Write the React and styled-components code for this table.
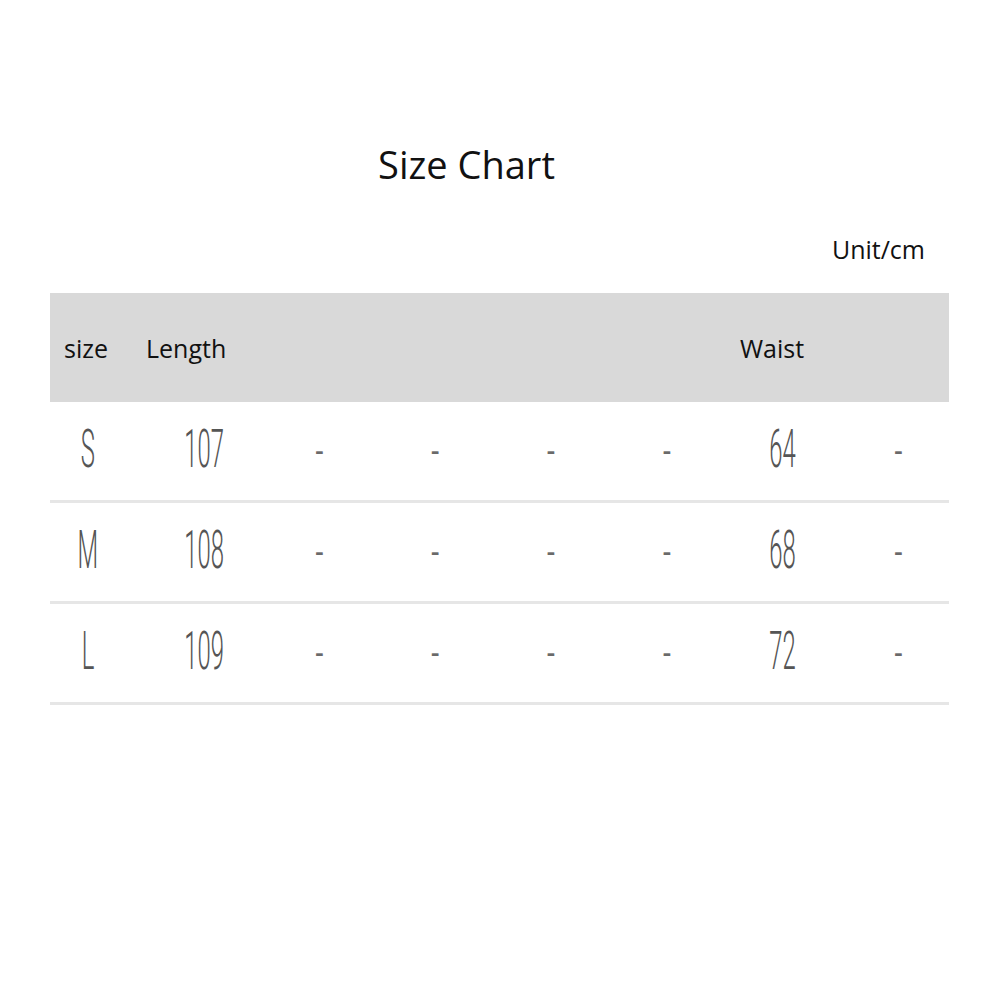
import React from "react";
import styled, { createGlobalStyle } from "styled-components";

const Global = createGlobalStyle`
  html, body { margin: 0; padding: 0; background: #fff; }
  body { font-family: "Open Sans", "Noto Sans", sans-serif; color: #111; }
`;

const Page = styled.div`
  width: 1000px;
  height: 1000px;
  box-sizing: border-box;
  padding: 140px 51px 0 50px;
  display: flex;
  flex-direction: column;
`;

const Title = styled.h1`
  margin: 0 16px 0 -50px;
  text-align: center;
  font-size: 38px;
  font-weight: 400;
  line-height: 48px;
  color: #111;
`;

const Unit = styled.div`
  margin-top: 45px;
  align-self: flex-end;
  margin-right: 24px;
  font-size: 25px;
  line-height: 32px;
  color: #111;
`;

const Table = styled.div`
  margin-top: 28px;
  display: flex;
  flex-direction: column;
`;

const Header = styled.div`
  height: 109px;
  background: #d9d9d9;
  display: grid;
  grid-template-columns: 82px 594px 1fr;
  align-items: center;
  padding-left: 14px;
  font-size: 25px;
  color: #111;
`;

const HeadCell = styled.span`
  line-height: 30px;
`;

const Row = styled.div`
  height: 98px;
  border-bottom: 3px solid #e6e6e6;
`;

const Cells = styled.div`
  height: 100%;
  margin-left: -20px;
  display: grid;
  grid-template-columns: repeat(8, 115.8px);
  align-items: center;
  justify-items: center;
`;

const Value = styled.span`
  display: inline-block;
  font-family: "Roboto", "DejaVu Sans", sans-serif;
  font-weight: 300;
  font-size: 53px;
  line-height: 60px;
  color: #555;
  transform: scaleX(0.45);
  margin-top: -4px;
`;

const Dash = styled.span`
  display: inline-block;
  font-family: "Roboto", "DejaVu Sans", sans-serif;
  font-weight: 700;
  font-size: 24px;
  line-height: 28px;
  color: #6a6a6a;
  margin-top: 2px;
`;

const rows = [
  ["S", "107", "-", "-", "-", "-", "64", "-"],
  ["M", "108", "-", "-", "-", "-", "68", "-"],
  ["L", "109", "-", "-", "-", "-", "72", "-"],
];

export default function App() {
  return (
    <>
      <Global />
      <Page>
        <Title>Size Chart</Title>
        <Unit>Unit/cm</Unit>
        <Table>
          <Header>
            <HeadCell>size</HeadCell>
            <HeadCell>Length</HeadCell>
            <HeadCell>Waist</HeadCell>
          </Header>
          {rows.map((r, i) => (
            <Row key={i}>
              <Cells>
                {r.map((v, j) =>
                  v === "-" ? <Dash key={j}>-</Dash> : <Value key={j}>{v}</Value>
                )}
              </Cells>
            </Row>
          ))}
        </Table>
      </Page>
    </>
  );
}
